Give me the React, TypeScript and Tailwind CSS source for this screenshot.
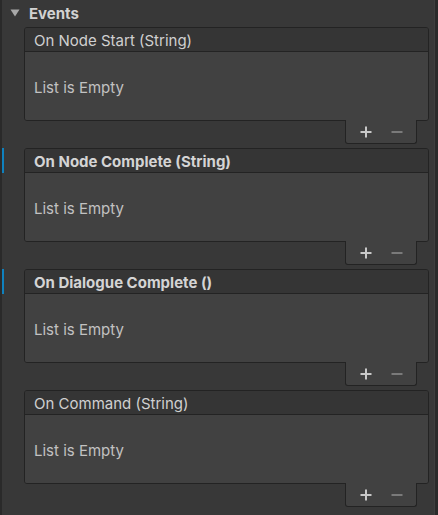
import React from "react";

type Ev = { title: string; bold?: boolean; modified?: boolean };

const events: Ev[] = [
  { title: "On Node Start (String)" },
  { title: "On Node Complete (String)", bold: true, modified: true },
  { title: "On Dialogue Complete ()", bold: true, modified: true },
  { title: "On Command (String)" },
];

function Plus() {
  return (
    <svg width="12" height="12" viewBox="0 0 12 12">
      <rect x="5" y="0.5" width="2" height="11" fill="#c8c8c8" />
      <rect x="0.5" y="5" width="11" height="2" fill="#c8c8c8" />
    </svg>
  );
}

function Minus() {
  return (
    <svg width="12" height="12" viewBox="0 0 12 12">
      <rect x="0.5" y="5" width="11" height="2" fill="#7a7a7a" />
    </svg>
  );
}

function Card({ ev }: { ev: Ev }) {
  return (
    <div className="relative flex flex-col w-[405px]">
      {ev.modified && (
        <div className="absolute left-[-22px] top-0 w-[2px] h-[25px] bg-[#0f81be]" />
      )}
      <div className="flex flex-col rounded-[3px] border border-[#232323] overflow-hidden">
        <div
          className={`h-[24px] flex items-center pl-[9px] bg-[#353535] border-b border-[#232323] text-[15px] leading-none pt-[1px] ${
            ev.bold ? "font-bold text-[#d4d4d4]" : "text-[#d0d0d0]"
          }`}
        >
          {ev.title}
        </div>
        <div className="h-[68px] flex items-center pl-[9px] pt-[2px] bg-[#414141] text-[15px] leading-none text-[#c2c2c2]">
          List is Empty
        </div>
      </div>
      <div className="self-end mr-[12px] -mt-px relative z-10 w-[72px] h-[24px] bg-[#414141] border-x border-b border-[#232323] rounded-b-[3px] flex items-center pl-[14px] gap-[19px]">
        <Plus />
        <Minus />
      </div>
    </div>
  );
}

export default function App() {
  return (
    <div
      className="w-[438px] h-[515px] bg-[#383838] flex overflow-hidden"
      style={{ fontFamily: "Inter, 'Noto Sans', sans-serif" }}
    >
      <div className="w-[2px] h-full bg-[#2a2a2a]" />
      <div className="flex-1 flex flex-col">
        <div className="h-[27px] flex items-center pl-[8px] gap-[9px]">
          <svg width="10" height="8" viewBox="0 0 10 8" className="mt-[-1px]">
            <path d="M0.5 0.5 L9.5 0.5 L5 7.5 Z" fill="#a8a8a8" />
          </svg>
          <span className="text-[15px] leading-none font-bold text-[#d2d2d2]">Events</span>
        </div>
        <div className="flex flex-col gap-[4px] pl-[22px]">
          {events.map((ev) => (
            <Card key={ev.title} ev={ev} />
          ))}
        </div>
      </div>
      <div className="w-[1px] h-full bg-[#3e3e3e]" />
      <div className="w-[3px] h-full bg-[#2a2a2a]" />
    </div>
  );
}
